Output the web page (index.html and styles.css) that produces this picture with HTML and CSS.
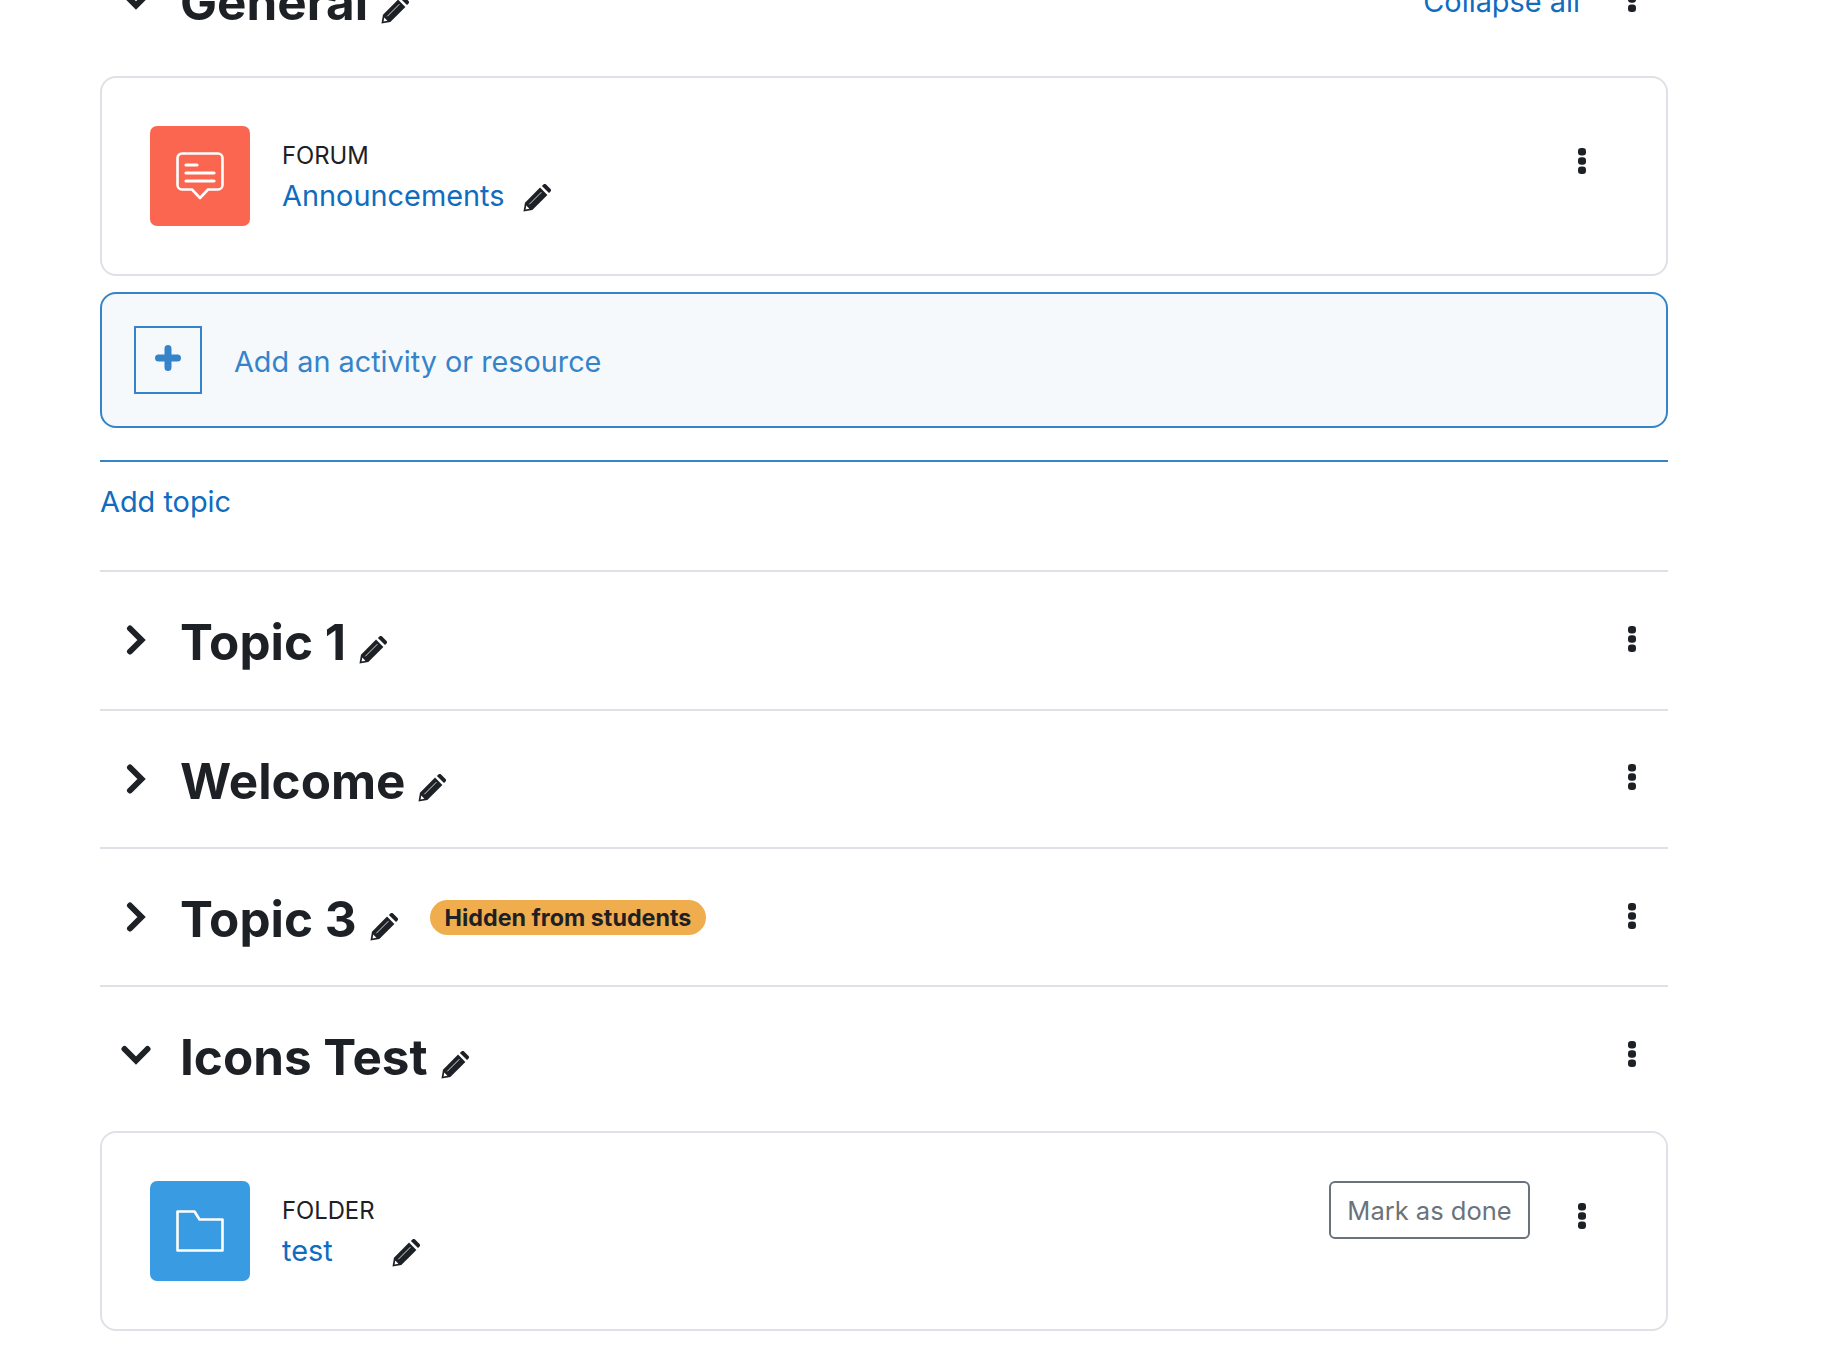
FILE: index.html
```html
<!DOCTYPE html>
<html lang="en">
<head>
<meta charset="utf-8">
<title>Course</title>
<link rel="stylesheet" href="styles.css">
</head>
<body>
<svg class="defs" width="0" height="0" aria-hidden="true">
  <symbol id="pencil" viewBox="0 0 24 24">
    <path fill="#1d2125" d="M.4 23.600 1.700 16 14.600 3.100 20.900 9.400 8 22.300Z"/>
    <path fill="#1d2125" d="M16.200 1.700 17.300.6a1.900 1.900 0 0 1 2.700 0L23.400 4a1.900 1.900 0 0 1 0 2.700L22.300 7.800Z"/>
    <path fill="none" stroke="#fff" stroke-width=".7" d="M5.400 17.400 15.800 7"/>
    <path fill="#fff" d="M2.200 21.800 2.800 18.500 5.500 21.200Z"/>
  </symbol>
  <symbol id="dots" viewBox="0 0 8 26">
    <rect x="0" y="0" width="8" height="7.400" rx="3.200" fill="#1d2125"/>
    <rect x="0" y="9.300" width="8" height="7.400" rx="3.200" fill="#1d2125"/>
    <rect x="0" y="18.600" width="8" height="7.400" rx="3.200" fill="#1d2125"/>
  </symbol>
  <symbol id="chev-right" viewBox="0 0 20 30">
    <path fill="none" stroke="#1d2125" stroke-width="6" stroke-linecap="round" stroke-linejoin="miter" d="M4 3.500 15.500 15 4 26.500"/>
  </symbol>
  <symbol id="chev-down" viewBox="0 0 30 20">
    <path fill="none" stroke="#1d2125" stroke-width="6" stroke-linecap="round" stroke-linejoin="miter" d="M3.500 4 15 15.500 26.500 4"/>
  </symbol>
</svg>

<main class="course">
  <section class="section">
    <div class="head">
      <span class="toggle"><svg class="chev-d"><use href="#chev-down"/></svg></span>
      <h3 class="title">General</h3>
      <svg class="pencil"><use href="#pencil"/></svg>
      <a class="collapse" href="#">Collapse all</a>
      <svg class="dots"><use href="#dots"/></svg>
    </div>
    <article class="card">
      <div class="activity-icon forum">
        <svg width="48" height="48" viewBox="0 0 48 48" fill="none" stroke="#fff" stroke-width="2.600" stroke-linecap="round" stroke-linejoin="round">
          <path d="M6 1.500H42a4.500 4.500 0 0 1 4.500 4.500V33a4.500 4.500 0 0 1-4.500 4.500H32L24 46 16 37.500H6A4.500 4.500 0 0 1 1.500 33V6A4.500 4.500 0 0 1 6 1.500Z"/>
          <path d="M10 13H21M10 21H38M10 29H38" stroke-width="3.200"/>
        </svg>
      </div>
      <div class="activity-text">
        <div class="type">FORUM</div>
        <div class="name"><a href="#">Announcements</a><svg class="pencil-l"><use href="#pencil"/></svg></div>
      </div>
      <div class="card-actions">
        <svg class="dots"><use href="#dots"/></svg>
      </div>
    </article>
    <div class="add-activity">
      <span class="plus-box">
        <svg class="plus" width="26" height="26" viewBox="0 0 26 26"><path fill="none" stroke="#3584c9" stroke-width="7" stroke-linecap="round" d="M13 3.500V22.500M3.500 13H22.500"/></svg>
      </span>
      <span class="add-label">Add an activity or resource</span>
    </div>
    <div class="add-topic"><a href="#">Add topic</a></div>
  </section>

  <section class="section">
    <div class="head">
      <span class="toggle"><svg class="chev-r"><use href="#chev-right"/></svg></span>
      <h3 class="title">Topic 1</h3>
      <svg class="pencil"><use href="#pencil"/></svg>
      <svg class="dots push"><use href="#dots"/></svg>
    </div>
  </section>

  <section class="section">
    <div class="head">
      <span class="toggle"><svg class="chev-r"><use href="#chev-right"/></svg></span>
      <h3 class="title">Welcome</h3>
      <svg class="pencil"><use href="#pencil"/></svg>
      <svg class="dots push"><use href="#dots"/></svg>
    </div>
  </section>

  <section class="section">
    <div class="head">
      <span class="toggle"><svg class="chev-r"><use href="#chev-right"/></svg></span>
      <h3 class="title">Topic 3</h3>
      <svg class="pencil"><use href="#pencil"/></svg>
      <span class="badge">Hidden from students</span>
      <svg class="dots push"><use href="#dots"/></svg>
    </div>
  </section>

  <section class="section last">
    <div class="head">
      <span class="toggle"><svg class="chev-d"><use href="#chev-down"/></svg></span>
      <h3 class="title">Icons Test</h3>
      <svg class="pencil"><use href="#pencil"/></svg>
      <svg class="dots push"><use href="#dots"/></svg>
    </div>
    <article class="card">
      <div class="activity-icon folder">
        <svg width="48" height="42" viewBox="0 0 48 42" fill="none" stroke="#fff" stroke-width="2.600" stroke-linejoin="round">
          <path d="M1.500 1.500H18.500L23.500 9.500H46.500V40.500H1.500Z"/>
        </svg>
      </div>
      <div class="activity-text">
        <div class="type">FOLDER</div>
        <div class="name"><a href="#">test</a><svg class="pencil-l wide"><use href="#pencil"/></svg></div>
      </div>
      <div class="card-actions">
        <button class="done" type="button">Mark as done</button>
        <svg class="dots"><use href="#dots"/></svg>
      </div>
    </article>
  </section>
</main>
</body>
</html>
```

FILE: styles.css
```css
* { box-sizing: border-box; }
html, body { margin: 0; padding: 0; height: 1346px; overflow: hidden; background: #fff; }
body { font-family: Inter, "Noto Sans", "Liberation Sans", sans-serif; font-size: 28px; color: #1d2125; }
a { color: #0f6cbf; text-decoration: none; }
.defs { display: block; height: 0; }

.course { width: 1568px; margin: -68px 0 0 100px; }

.section { border-bottom: 2px solid #dee2e6; }
.section.last { border-bottom: 0; }

.head { height: 136.3px; display: flex; align-items: center; padding-top: 5px; position: relative; }
.toggle { width: 80px; flex: none; display: flex; justify-content: center; padding-right: 9px; margin-top: -5px; }
.chev-r { width: 20px; height: 30px; display: block; }
.chev-d { width: 30px; height: 20px; display: block; }
.title { margin: 0; font-size: 49.4px; line-height: 59px; font-weight: 700; color: #1d2125; }
.pencil { width: 28px; height: 28px; margin: 14px 0 0 13px; flex: none; }

.collapse { margin-left: auto; font-size: 28.9px; margin-top: -3px; }
.dots { width: 8px; height: 26px; flex: none; }
.head .dots { margin-right: 32px; margin-top: -8px; }
.head .dots.push { margin-left: auto; }
.collapse + .dots { margin-left: 48px; }

.badge { margin-left: 32px; height: 35px; line-height: 35px; padding: 0 15px; border-radius: 18px; background: #f0ad4e; font-size: 23.300px; font-weight: 700; color: #1d2125; margin-top: -5px; }

.card { margin-top: 8px; height: 200px; border: 2px solid #dee2e6; border-radius: 16px; padding: 48px 0 0 48px; display: flex; align-items: flex-start; background: #fff; }
.activity-icon { width: 100px; height: 100px; border-radius: 7px; flex: none; display: flex; align-items: center; justify-content: center; }
.forum { background: #fa6650; }
.folder { background: #399be2; }
.activity-text { margin-left: 32px; padding-top: 15px; }
.type { font-size: 23.800px; line-height: 30px; color: #1d2125; }
.name { margin-top: 5px; font-size: 28.900px; line-height: 40px; display: flex; align-items: center; }
.pencil-l { width: 28px; height: 28px; margin: 4px 0 0 18px; flex: none; }
.pencil-l.wide { margin-left: 59px; }

.card-actions { margin-left: auto; display: flex; align-items: flex-start; margin-right: 80px; }
.card-actions .dots { margin-top: 22px; }
.done { width: 201px; height: 58px; margin: 0 48px 0 0; border: 2px solid #6a737b; border-radius: 6px; background: #fff; color: #6a737b; font-family: inherit; font-size: 25.500px; padding: 0; }

.add-activity { margin-top: 16px; height: 136px; border: 2px solid #3584c9; border-radius: 16px; background: #f5f9fc; display: flex; align-items: center; padding-left: 32px; }
.plus-box { width: 68px; height: 68px; margin-top: -1px; border: 2px solid #3584c9; display: flex; align-items: center; justify-content: center; flex: none; }
.plus { margin-top: -3px; }
.add-label { margin-left: 32px; font-size: 28.800px; color: #3584c9; margin-top: 2px; }

.add-topic { margin-top: 32px; border-top: 2px solid #3584c9; height: 110px; padding-top: 20px; font-size: 28.900px; line-height: 40px; }
```
